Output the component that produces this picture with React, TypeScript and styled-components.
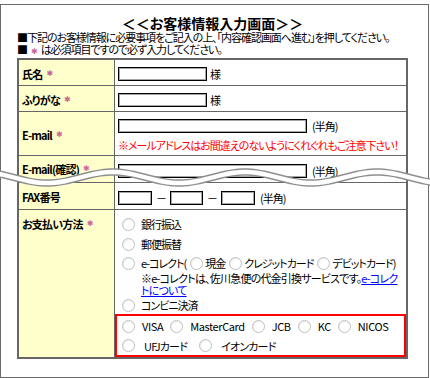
import styled, { createGlobalStyle } from "styled-components";

const WAVE_TOP = 156;

// 破れ目の波線（上下2本）を点列で作る
const wave = (mid: number, amp: number) => {
  const pts: string[] = [];
  for (let x = -4; x <= 436; x += 3) {
    const y = mid - amp * Math.cos((2 * Math.PI * (x - 113)) / 132);
    pts.push(`${x},${y.toFixed(2)}`);
  }
  return pts;
};

const upper = wave(174.5, 5.5);
const lower = wave(180.5, 5.5);
const band = [...upper, ...[...lower].reverse()].join(" ");

const cards = ["VISA", "MasterCard", "JCB", "KC", "NICOS"];
const cards2 = ["UFJカード", "イオンカード"];

const GlobalStyle = createGlobalStyle`
	html, body {
		margin: 0;
		padding: 0;
		background: #fff;
	}
	body {
		font-family: "Noto Sans CJK JP", "Noto Sans", sans-serif;
		font-size: 11px;
		color: #000;
		letter-spacing: -1px;
		font-feature-settings: "palt";
	}
`;

const App = () => {
	return (
		<>
			<GlobalStyle />
			<Frame>
				<Title>＜＜お客様情報入力画面＞＞</Title>
				<Notes>
					■下記のお客様情報に必要事項をご記入の上、「内容確認画面へ進む」を押してください。
					<br />■<Req $gap={4} $after={3}>✱</Req>は必須項目ですので必ず入力してください。
				</Notes>

				<FormGrid>
					<LabelCell>
						氏名<Req>✱</Req>
					</LabelCell>
					<FieldCell>
						<TextBox $w={89} />
						<Suffix $gap={3}>様</Suffix>
					</FieldCell>

					<LabelCell>
						ふりがな<Req>✱</Req>
					</LabelCell>
					<FieldCell>
						<TextBox $w={89} />
						<Suffix $gap={3}>様</Suffix>
					</FieldCell>

					<LabelCell>
						E-mail<Req>✱</Req>
					</LabelCell>
					<FieldCell $column>
						<InputLine>
							<TextBox $w={189} />
							<Suffix $gap={5}>(半角)</Suffix>
						</InputLine>
						<Hint>※メールアドレスはお間違えのないようにくれぐれもご注意下さい！</Hint>
					</FieldCell>

					<LabelCell $pt={0}>
						E-mail(確認)<Req>✱</Req>
					</LabelCell>
					<FieldCell>
						<TextBox $w={189} />
						<Suffix $gap={5}>(半角)</Suffix>
					</FieldCell>

					<LabelCell>FAX番号</LabelCell>
					<FieldCell>
						<TextBox $w={34} />
						<Dash>－</Dash>
						<TextBox $w={33} />
						<Dash>－</Dash>
						<TextBox $w={34} />
						<Suffix $gap={5}>(半角)</Suffix>
					</FieldCell>

					<LabelCell $top $last>
						お支払い方法<Req>✱</Req>
					</LabelCell>
					<PayCell>
						<OptionRow $h={20}>
							<Radio type="radio" name="pay" />
							<OptText>銀行振込</OptText>
						</OptionRow>
						<OptionRow $h={20}>
							<Radio type="radio" name="pay" />
							<OptText>郵便振替</OptText>
						</OptionRow>
						<EcoRow>
							<RadioSlot>
								<Radio type="radio" name="pay" />
							</RadioSlot>
							<EcoBody>
								<EcoLine>
									e-コレクト(
									<Radio type="radio" name="eco" $inline />
									現金
									<Radio type="radio" name="eco" $inline />
									クレジットカード
									<Radio type="radio" name="eco" $inline />
									デビットカード)
								</EcoLine>
								<Note>
									※e-コレクトは、佐川急便の代金引換サービスです。
									<NoteLink href="#">
										e-コレク
										<br />
										トについて
									</NoteLink>
								</Note>
							</EcoBody>
						</EcoRow>
						<OptionRow $h={18}>
							<Radio type="radio" name="pay" />
							<OptText>コンビニ決済</OptText>
						</OptionRow>

						<CardBox>
							<CardRow $h={20}>
								{cards.map(c => (
									<CardItem key={c}>
										<Radio type="radio" name="card" />
										<CardName $latin>{c}</CardName>
									</CardItem>
								))}
							</CardRow>
							<CardRow $h={19}>
								{cards2.map(c => (
									<CardItem key={c} $wide>
										<Radio type="radio" name="card" />
										<CardName $kana>{c}</CardName>
									</CardItem>
								))}
							</CardRow>
						</CardBox>
					</PayCell>
				</FormGrid>

				<WaveSvg width={432} height={40} viewBox={`-1 ${WAVE_TOP} 432 40`}>
					<polygon points={band} fill="#fff" />
					<polyline points={upper.join(" ")} fill="none" stroke="#8f8f8f" strokeWidth={1.4} />
					<polyline points={lower.join(" ")} fill="none" stroke="#8f8f8f" strokeWidth={1.4} />
				</WaveSvg>
			</Frame>
		</>
	);
};

const Frame = styled.div`
	position: relative;
	box-sizing: border-box;
	width: 429px;
	height: 374px;
	margin-top: 4px;
	padding: 11px 0 0 16px;
	border: 1px solid #6b6b6b;
`;

const Title = styled.h1`
	width: 391px;
	margin: 0;
	font-size: 14px;
	font-weight: bold;
	line-height: 15px;
	letter-spacing: 0;
	text-align: center;
`;

const Notes = styled.p`
	margin: 0;
	line-height: 12px;
	letter-spacing: -1.05px;
	white-space: nowrap;
`;

const Req = styled.span<{ $gap?: number; $after?: number }>`
	margin-left: ${props => (props.$gap ?? 4)}px;
	margin-right: ${props => (props.$after ?? 0)}px;
	font-family: "DejaVu Sans", sans-serif;
	font-size: 8px;
	font-weight: normal;
	letter-spacing: 0;
	color: #cc6699;
`;

const FormGrid = styled.div`
	box-sizing: border-box;
	width: 391px;
	display: grid;
	grid-template-columns: 96px minmax(0, 1fr);
	grid-template-rows: 26px 26px 44px 27px 27px 147px;
	border: 2px solid #666;
`;

const LabelCell = styled.div<{ $top?: boolean; $last?: boolean; $pt?: number }>`
	box-sizing: border-box;
	display: flex;
	align-items: ${props => (props.$top ? "flex-start" : "center")};
	padding: ${props => (props.$top ? 4 : props.$pt ?? 2)}px 0 0 3px;
	line-height: 20px;
	font-weight: bold;
	letter-spacing: -0.8px;
	white-space: nowrap;
	background: #ffffcc;
	border-right: 1px solid #666;
	border-bottom: ${props => (props.$last ? "none" : "1px solid #666")};
`;

const FieldCell = styled.div<{ $column?: boolean }>`
	box-sizing: border-box;
	display: flex;
	flex-direction: ${props => (props.$column ? "column" : "row")};
	align-items: ${props => (props.$column ? "flex-start" : "center")};
	padding: ${props => (props.$column ? "7px" : "3px")} 0 0 3px;
	border-bottom: 1px solid #666;
	white-space: nowrap;
`;

const InputLine = styled.div`
	display: flex;
	align-items: center;
	height: 14px;
`;

const TextBox = styled.input<{ $w: number }>`
	box-sizing: border-box;
	width: ${props => props.$w}px;
	height: 14px;
	margin: 0;
	padding: 0 2px;
	border: 1px solid #000;
	box-shadow: inset 0 0 0 1px rgba(0, 0, 0, 0.35);
	background: #fff;
	font: inherit;
	outline: none;
`;

const Suffix = styled.span<{ $gap: number }>`
	margin-left: ${props => props.$gap}px;
`;

const Dash = styled.span`
	margin: 0 4px;
`;

const Hint = styled.div`
	margin-top: 6px;
	line-height: 12px;
	color: #ff0000;
`;

const PayCell = styled.div`
	display: flex;
	flex-direction: column;
	padding-top: 4px;
	min-width: 0;
`;

const OptionRow = styled.div<{ $h: number }>`
	display: flex;
	align-items: center;
	height: ${props => props.$h}px;
	padding-left: 7px;
`;

const Radio = styled.input<{ $inline?: boolean }>`
	appearance: none;
	box-sizing: border-box;
	flex: none;
	width: 13px;
	height: 13px;
	margin: ${props => (props.$inline ? "0 2px 0 4px" : "0")};
	border: 1px solid #bfbfbf;
	border-radius: 50%;
	background: #fff;
	box-shadow: inset 1px 1px 1px rgba(0, 0, 0, 0.07);
`;

const OptText = styled.span`
	margin-left: 6px;
`;

const EcoRow = styled.div`
	display: flex;
	align-items: flex-start;
	padding-left: 7px;
`;

const RadioSlot = styled.div`
	display: flex;
	align-items: center;
	height: 18px;
`;

const EcoBody = styled.div`
	margin-left: 6px;
`;

const EcoLine = styled.div`
	display: flex;
	align-items: center;
	height: 18px;
	white-space: nowrap;
`;

const Note = styled.div`
	line-height: 12px;
	letter-spacing: -0.8px;
	white-space: nowrap;
`;

const NoteLink = styled.a`
	color: #0000ff;
	text-decoration: underline;
`;

const CardBox = styled.div`
	display: flex;
	flex-direction: column;
	padding-left: 5px;
	border: 2px solid #ff0000;
`;

const CardRow = styled.div<{ $h: number }>`
	display: flex;
	align-items: center;
	height: ${props => props.$h}px;
`;

const CardItem = styled.label<{ $wide?: boolean }>`
	display: flex;
	align-items: center;
	margin-right: ${props => (props.$wide ? 12 : 7)}px;
`;

const CardName = styled.span<{ $latin?: boolean; $kana?: boolean }>`
	margin-left: ${props => (props.$kana ? 9 : 7)}px;
	letter-spacing: ${props => (props.$latin ? "-0.4px" : "-0.8px")};
`;

const WaveSvg = styled.svg`
	position: absolute;
	left: -2px;
	top: ${WAVE_TOP - 5}px;
	overflow: visible;
`;

export default App;
